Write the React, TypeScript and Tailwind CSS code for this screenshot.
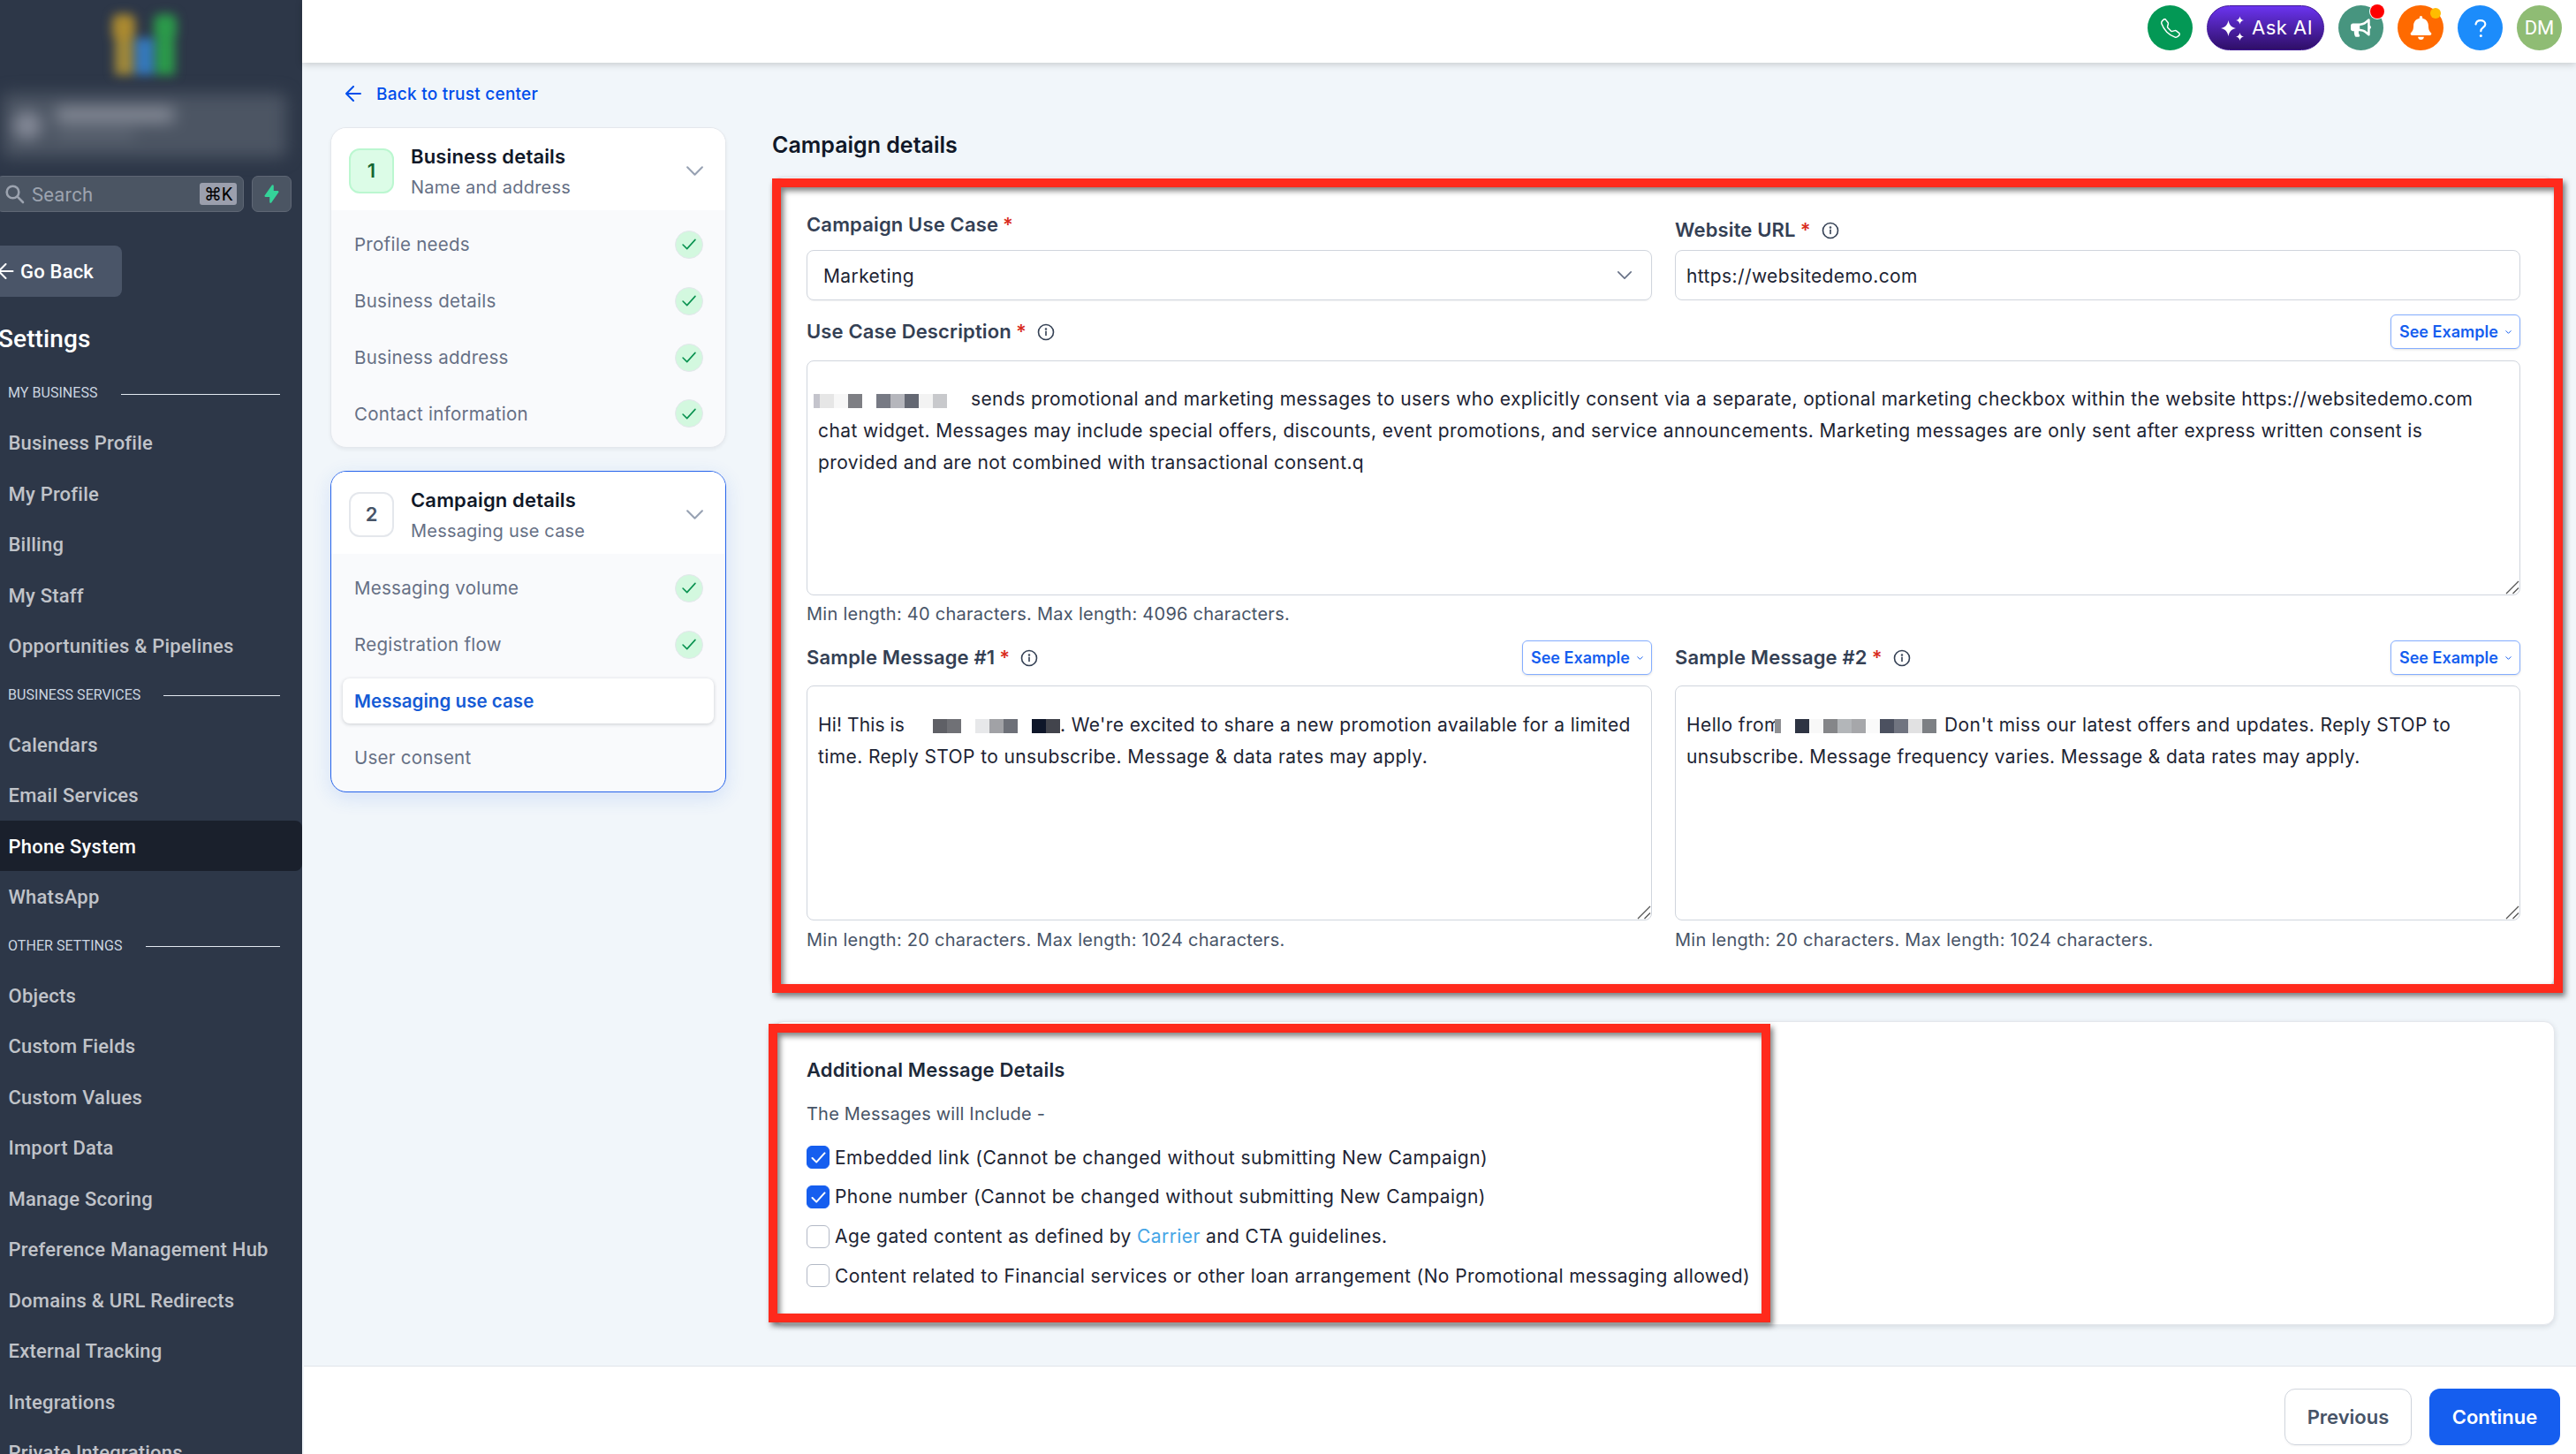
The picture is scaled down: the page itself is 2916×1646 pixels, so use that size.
import React from 'react';
import clsx from 'clsx';
import { BsTelephone } from 'react-icons/bs';
import { FaBell, FaBullhorn } from 'react-icons/fa';
import { HiLightningBolt } from 'react-icons/hi';

interface NavSection {
  title: string;
  items: string[];
}

interface Step {
  label: string;
  done?: boolean;
  active?: boolean;
}

const NAV_SECTIONS: NavSection[] = [
  {
    title: 'MY BUSINESS',
    items: ['Business Profile', 'My Profile', 'Billing', 'My Staff', 'Opportunities & Pipelines'],
  },
  {
    title: 'BUSINESS SERVICES',
    items: ['Calendars', 'Email Services', 'Phone System', 'WhatsApp'],
  },
  {
    title: 'OTHER SETTINGS',
    items: [
      'Objects',
      'Custom Fields',
      'Custom Values',
      'Import Data',
      'Manage Scoring',
      'Preference Management Hub',
      'Domains & URL Redirects',
      'External Tracking',
      'Integrations',
      'Private Integrations',
    ],
  },
];

const BUSINESS_STEPS: Step[] = [
  { label: 'Profile needs', done: true },
  { label: 'Business details', done: true },
  { label: 'Business address', done: true },
  { label: 'Contact information', done: true },
];

const CAMPAIGN_STEPS: Step[] = [
  { label: 'Messaging volume', done: true },
  { label: 'Registration flow', done: true },
  { label: 'Messaging use case', active: true },
  { label: 'User consent' },
];

/* ---------- small icons ---------- */

const ArrowLeft: React.FC<{ className?: string }> = ({ className }) => (
  <svg viewBox="0 0 18 18" className={className} fill="none" stroke="currentColor" strokeLinecap="round" strokeLinejoin="round">
    <path d="M17 9H1M9 1L1 9l8 8" />
  </svg>
);

const Chevron: React.FC<{ className?: string }> = ({ className }) => (
  <svg viewBox="0 0 20 12" className={className} fill="none" stroke="currentColor" strokeLinecap="round" strokeLinejoin="round">
    <path d="M2 2l8 8 8-8" />
  </svg>
);

const Check: React.FC<{ className?: string }> = ({ className }) => (
  <svg viewBox="0 0 18 14" className={className} fill="none" stroke="currentColor" strokeLinecap="round" strokeLinejoin="round">
    <path d="M1.5 7.5l5 5L16.500 1.500" />
  </svg>
);

const Info = () => (
  <svg viewBox="0 0 20 20" className="ml-[12px] h-5 w-5 text-[#344054]" fill="none" stroke="currentColor" strokeWidth="1.6">
    <circle cx="10" cy="10" r="8.500" />
    <path d="M10 9.200v4.300" strokeLinecap="round" />
    <circle cx="10" cy="6.500" r="0.500" />
  </svg>
);

const Sparkles = () => (
  <svg viewBox="0 0 28 28" className="h-7 w-7" fill="currentColor">
    <path d="M9.500 5c1.200 5.500 3 7.500 8.500 9-5.500 1.500-7.300 3.500-8.500 9-1.200-5.500-3-7.500-8.500-9 5.500-1.500 7.300-3.500 8.500-9z" />
    <path d="M22.500 0.500c.6 2.800 1.700 3.900 4.500 4.500-2.800.6-3.900 1.700-4.500 4.500-.6-2.800-1.700-3.900-4.500-4.500 2.800-.6 3.900-1.700 4.500-4.500z" />
    <path d="M22.500 19c.6 2.800 1.700 3.900 4.500 4.500-2.800.6-3.900 1.700-4.500 4.500-.6-2.800-1.700-3.900-4.500-4.500 2.800-.6 3.900-1.700 4.500-4.500z" />
  </svg>
);

/* ---------- sidebar ---------- */

const Sidebar = () => (
  <aside className="flex h-full w-[342px] shrink-0 flex-col overflow-hidden bg-[#2d3748] font-[Roboto,sans-serif]">
    <div className="ml-[127px] mt-[16px] flex h-[69px] shrink-0 items-end blur-[6px]">
      <div className="flex h-[69px] w-[26px] flex-col items-center">
        <div className="h-[30px] w-[26px] rounded-lg bg-[#ab8a30]" />
        <div className="h-[39px] w-[21px] bg-[#9f883a]" />
      </div>
      <div className="h-[42px] w-[21px] bg-[#3579bd]" />
      <div className="flex h-[69px] w-[26px] flex-col items-center">
        <div className="h-[30px] w-[26px] rounded-lg bg-[#2b9a4a]" />
        <div className="h-[39px] w-[22px] bg-[#2b9a4a]" />
      </div>
    </div>

    {/* Account switcher */}
    <div className="ml-[3px] mt-[21px] flex h-[72px] w-[321px] shrink-0 items-center rounded-md bg-[#4c5563] pl-3 blur-[9px]">
      <div className="h-8 w-8 rounded-full bg-[#868b99]" />
      <div className="-mt-[6px] ml-4 flex flex-col gap-2.5">
        <div className="h-[16px] w-[134px] rounded bg-[#8b909c]" />
        <div className="h-[8px] w-[90px] rounded bg-[#656d7a]" />
      </div>
    </div>

    <div className="mt-[21px] flex h-[41px] shrink-0">
      <div className="-ml-1 flex w-[280px] items-center rounded-[7px] border border-[#5f6775] bg-[#4b5563] pl-[9px] pr-[7px]">
        <svg viewBox="0 0 22 22" className="h-[22px] w-[22px] text-[#9ca3af]" fill="none" stroke="currentColor" strokeWidth="2.600" strokeLinecap="round">
          <circle cx="8.500" cy="8.500" r="6.800" />
          <path d="M13.700 13.700L20 20" />
        </svg>
        <span className="ml-[8px] pt-[2px] text-[22px] tracking-[0.3px] text-[#9ca3af]">Search</span>
        <span className="ml-auto flex h-[25px] w-[42px] items-center justify-center rounded-[3px] bg-[#9b9fad] text-[20px] leading-none text-black">⌘K</span>
      </div>
      <div className="ml-[9px] flex w-[45px] items-center justify-center rounded-[7px] border border-[#5f6775] bg-[#4b5563]">
        <HiLightningBolt className="h-[23px] w-[23px] text-[#34d399]" />
      </div>
    </div>

    <div className="mt-[38px] flex h-[58px] w-[138px] shrink-0 items-center rounded-r-lg bg-[#4a5568] text-[22px] font-medium text-white">
      <ArrowLeft className="-ml-[3px] h-[18px] w-[19px] stroke-2" />
      <span className="ml-[7px] tracking-[0.2px]">Go Back</span>
    </div>

    <h1 className="-ml-[2px] mt-[32px] h-[50px] shrink-0 text-[28px] font-medium leading-[32px] tracking-[0.1px] text-white">Settings</h1>

    {NAV_SECTIONS.map(section => (
      <div key={section.title} className="shrink-0">
        <div className="flex h-[54px] items-center pl-[9px] pr-[25px]">
          <span className="text-[16px] tracking-[0.05px] text-[#cbd5e0]">{section.title}</span>
          <span className="ml-[26px] mt-[2px] h-px flex-1 bg-[#e2e8f0]" />
        </div>
        {section.items.map(item => (
          <div
            key={item}
            className={clsx(
              'flex h-[57.500px] items-center rounded-r-lg pl-[9.500px] pt-[2px] text-[22px] font-medium tracking-[0.22px]',
              item === 'Phone System' ? 'bg-[#1a202c] text-white' : 'text-[#c0c3c9]',
            )}
          >
            {item}
          </div>
        ))}
      </div>
    ))}
  </aside>
);

/* ---------- top bar ---------- */

const TopBar = () => (
  <header className="relative z-10 flex h-[71px] shrink-0 gap-4 bg-white pr-4 pt-[6px] text-white shadow-[0_2px_8px_rgba(0,0,0,0.18)]">
    <div className="ml-auto flex h-[51px] w-[51px] items-center justify-center rounded-full bg-[#039855]">
      <BsTelephone className="h-[22px] w-[22px]" />
    </div>
    <div className="flex h-[51px] w-[133px] items-center rounded-full border border-[#3f1596] bg-linear-to-b from-[#6b34f0] to-[#2f0f68] pl-[14px]">
      <Sparkles />
      <span className="ml-[8px] text-[22px] tracking-[0.5px]">Ask AI</span>
    </div>
    <div className="relative flex h-[51px] w-[51px] items-center justify-center rounded-full bg-[#47957f]">
      <FaBullhorn className="h-[23px] w-[23px]" />
      <span className="absolute -right-[1px] -top-[1px] h-4 w-4 rounded-full bg-[#ff0000] ring-1 ring-white" />
    </div>
    <div className="relative flex h-[51px] w-[52px] items-center justify-center rounded-full bg-[#ff6a00]">
      <FaBell className="h-[27px] w-[25px]" />
      <span className="absolute right-[3px] top-[3px] h-3 w-3 rounded-full bg-[#ffbc00]" />
    </div>
    <div className="flex h-[51px] w-[51px] items-center justify-center rounded-full bg-[#1c8cfb]">
      <svg viewBox="0 0 14 20" className="h-[20px] w-[14px]" fill="none" stroke="currentColor" strokeWidth="2.200" strokeLinecap="round">
        <path d="M1.500 5.500C2 2.800 4.200 1.200 7 1.200c3 0 5.300 1.700 5.300 4.300 0 3.700-5 3.800-5 7.700" />
        <path d="M7.300 18.400v.1" strokeWidth="3" />
      </svg>
    </div>
    <div className="flex h-[51px] w-[51px] items-center justify-center rounded-full bg-[#8fbc74] font-[Roboto,sans-serif] text-[22px]">DM</div>
  </header>
);

/* ---------- stepper ---------- */

interface StepCardProps {
  index: number;
  title: string;
  subtitle: string;
  steps: Step[];
  current?: boolean;
}

const StepCard: React.FC<StepCardProps> = ({ index, title, subtitle, steps, current = false }) => (
  <div
    className={clsx(
      'overflow-hidden rounded-[18px] border bg-[#f9fafc]',
      current
        ? 'h-[364px] border-[#2563eb] shadow-[0_6px_22px_rgba(37,99,235,0.14)]'
        : 'h-[363px] border-[#e4e7ec] shadow-[0_2px_4px_rgba(16,24,40,0.06)]',
    )}
  >
    <div className="flex h-[93px] items-center bg-white pl-[20px] pr-[24px] pt-[4px]">
      <div
        className={clsx(
          'flex h-[51px] w-[51px] items-center justify-center rounded-xl border-2 text-[22px] font-semibold',
          current ? 'border-[#e4e7ec] text-[#475467]' : 'border-[#bbf7d0] bg-[#dcfce7] text-[#166534]',
        )}
      >
        {index}
      </div>
      <div className="ml-[19px] pt-[2px]">
        <div className="text-[22px] font-semibold leading-[35px] tracking-[0.15px] text-[#101828]">{title}</div>
        <div className="text-[20px] leading-[35px] tracking-[0.2px] text-[#667085]">{subtitle}</div>
      </div>
      <Chevron className="ml-auto h-[13px] w-[21px] stroke-2 text-[#98a2b3]" />
    </div>
    <div className="flex flex-col gap-[12.300px] px-[13px] pt-[13px]">
      {steps.map(step => (
        <div
          key={step.label}
          className={clsx(
            'flex h-[51.600px] items-center rounded-lg pl-[13px] pr-[12px] text-[20.500px]',
            step.active
              ? 'bg-white font-semibold tracking-[0.050px] text-[#155bd5] shadow-[0_1px_4px_rgba(16,24,40,0.2)]'
              : 'tracking-[0.270px] text-[#667085]',
          )}
        >
          <span className="pt-[2px]">{step.label}</span>
          {step.done && (
            <span className="ml-auto flex h-8 w-8 items-center justify-center rounded-full border border-[#e4e7ec] bg-[#d3f8df]">
              <Check className="h-[13px] w-[18px] stroke-[1.700px] text-[#099250]" />
            </span>
          )}
        </div>
      ))}
    </div>
  </div>
);

/* ---------- form pieces ---------- */

const Label: React.FC<{ text: string; info?: boolean }> = ({ text, info = true }) => (
  <div className="flex h-[35px] items-center text-[22px] font-semibold tracking-[0.15px] text-[#344054]">
    {text}
    <span className="ml-[5px] text-[#d92d20]">*</span>
    {info && <Info />}
  </div>
);

const LabelRow: React.FC<{ text: string }> = ({ text }) => (
  <div className="flex h-[39px] items-center justify-between">
    <Label text={text} />
    <button className="flex h-[39px] w-[147px] items-center rounded-md border border-[#84adff] pl-[9px] text-[18px] font-semibold text-[#155eef] shadow-sm">
      See Example
      <Chevron className="ml-[8px] h-[4px] w-[7px] stroke-[3px]" />
    </button>
  </div>
);

const TextBox: React.FC<{ children: React.ReactNode }> = ({ children }) => (
  <div className="relative h-[266px] rounded-lg border border-[#d0d5dd] bg-white pl-[12px] pt-[26px] text-[21px] leading-[36px] tracking-[0.390px] text-[#1d2433]">
    {children}
    <svg viewBox="0 0 16 16" className="absolute bottom-0 right-0 h-4 w-4" stroke="#555" strokeWidth="1.300">
      <path d="M1 15L15 1M8.500 15L15 8.500" />
    </svg>
  </div>
);

const Hint: React.FC<{ children: React.ReactNode }> = ({ children }) => (
  <div className="h-[28px] text-[20px] leading-[28px] tracking-[0.260px] text-[#475467]">{children}</div>
);

// Pixelated strip hiding the business name
const Redacted: React.FC<{ cells: string[]; lead?: string; className?: string }> = ({ cells, lead, className }) => (
  <span className={clsx('inline-flex h-4 shrink-0', className)}>
    {lead && <span className="w-[7px]" style={{ background: lead }} />}
    {cells.map((color, i) => (
      <span key={i} className="w-4" style={{ background: color || 'transparent' }} />
    ))}
  </span>
);

const CheckRow: React.FC<{ checked?: boolean; children: React.ReactNode }> = ({ checked = false, children }) => (
  <div className="flex h-[44.700px] items-center text-[21px] tracking-[0.400px] text-[#1d2433]">
    <span
      className={clsx(
        'mr-[6px] flex h-[26px] w-[26px] items-center justify-center rounded-[6px] border',
        checked ? 'border-[#155eef] bg-[#155eef] text-white' : 'border-[#b3b9c6] bg-white',
      )}
    >
      {checked && <Check className="h-[13px] w-[17px] stroke-[2.200px]" />}
    </span>
    <span>{children}</span>
  </div>
);

const CampaignForm = () => (
  <section className="relative h-[918px] rounded-xl border border-[#e4e7ec] bg-white pl-[37px] pr-[38px] pt-[36px] shadow-[0_2px_6px_rgba(16,24,40,0.12)]">
    <div className="grid grid-cols-2 gap-[26px]">
      <div>
        <Label text="Campaign Use Case" info={false} />
        <div className="mt-[11px] flex h-[57px] items-center justify-between rounded-lg border border-[#d0d5dd] pl-[18px] pr-[21px] text-[21px] tracking-[0.390px] text-[#1d2433] shadow-xs">
          <span className="pt-[2px]">Marketing</span>
          <Chevron className="h-[11px] w-[18px] stroke-[1.800px] text-[#667085]" />
        </div>
      </div>
      <div className="pt-[6px]">
        <Label text="Website URL" />
        <div className="mt-[5px] flex h-[57px] items-center rounded-lg border border-[#d0d5dd] pl-[12px] pt-[2px] text-[21px] tracking-[0.390px] text-[#1d2433]">
          https://websitedemo.com
        </div>
      </div>
    </div>

    <div className="mt-[16px]">
      <LabelRow text="Use Case Description" />
      <div className="mt-[13px]">
        <TextBox>
          <div className="-mt-px flex items-center whitespace-nowrap">
            <Redacted
              className="-ml-[5px] mr-[27px] mt-[3px]"
              lead="#c4c4cc"
              cells={['#e6e6e6', '#f7f7f7', '#7e7f84', '', '#777a84', '#b5b6bc', '#646873', '#f3f3f3', '#c8c9cc']}
            />
            sends promotional and marketing messages to users who explicitly consent via a separate, optional marketing checkbox within the website https://websitedemo.com
          </div>
          <div className="whitespace-nowrap">
            chat widget. Messages may include special offers, discounts, event promotions, and service announcements. Marketing messages are only sent after express written consent is
          </div>
          <div>provided and are not combined with transactional consent.q</div>
        </TextBox>
      </div>
      <div className="mt-[7px]">
        <Hint>Min length: 40 characters. Max length: 4096 characters.</Hint>
      </div>
    </div>

    <div className="mt-[16px] grid grid-cols-2 gap-[26px]">
      <div>
        <LabelRow text="Sample Message #1" />
        <div className="mb-[8px] mt-[12px]">
          <TextBox>
            <div className="flex items-center whitespace-nowrap">
              <span className="w-[130px] tracking-[0.100px]">Hi! This is</span>
              <Redacted className="mt-[2px]" cells={['#5f6066', '#707176', '', '#e7e8ea', '#a1a2a6', '#6d7078', '', '#0e1629', '#42444c']} />
              <span>. We're excited to share a new promotion available for a limited</span>
            </div>
            <div>time. Reply STOP to unsubscribe. Message &amp; data rates may apply.</div>
          </TextBox>
        </div>
        <Hint>Min length: 20 characters. Max length: 1024 characters.</Hint>
      </div>
      <div>
        <LabelRow text="Sample Message #2" />
        <div className="mb-[8px] mt-[12px]">
          <TextBox>
            <div className="flex items-center whitespace-nowrap">
              <span className="w-[100px]">Hello from</span>
              <Redacted
                className="mt-[2px]"
                lead="#8f9093"
                cells={['', '#2e3443', '#f8f8f8', '#858689', '#b3b6b9', '#a6a7aa', '#fafafa', '#4c5160', '#707480', '#e1e1e2', '#7d8084']}
              />
              <span className="ml-[9px] tracking-[0.420px]">Don't miss our latest offers and updates. Reply STOP to</span>
            </div>
            <div className="tracking-[0.360px]">unsubscribe. Message frequency varies. Message &amp; data rates may apply.</div>
          </TextBox>
        </div>
        <Hint>Min length: 20 characters. Max length: 1024 characters.</Hint>
      </div>
    </div>

    {/* Highlight frame */}
    <div className="pointer-events-none absolute -left-[2px] top-[1px] h-[922px] w-[2027px] border-[10px] border-[#ff2a1c] drop-shadow-[3px_4px_3px_rgba(0,0,0,0.5)]" />
  </section>
);

const AdditionalDetails = () => (
  <section className="relative mt-[38px] h-[344px] rounded-xl border border-[#e4e7ec] bg-white pl-[37px] pt-[39px] shadow-[0_2px_6px_rgba(16,24,40,0.12)]">
    <h3 className="h-[30px] text-[22px] font-semibold leading-[30px] tracking-[0.15px] text-[#1d2939]">Additional Message Details</h3>
    <p className="mt-[20px] h-[30px] text-[20px] leading-[30px] tracking-[0.2px] text-[#475467]">The Messages will Include -</p>
    <div className="mt-[12px]">
      <CheckRow checked>
        <span className="tracking-[0.460px]">Embedded link (Cannot be changed without submitting New Campaign)</span>
      </CheckRow>
      <CheckRow checked>
        <span className="tracking-[0.460px]">Phone number (Cannot be changed without submitting New Campaign)</span>
      </CheckRow>
      <CheckRow>
        Age gated content as defined by <span className="text-[#45a5e6]">Carrier</span> and CTA guidelines.
      </CheckRow>
      <CheckRow>Content related to Financial services or other loan arrangement (No Promotional messaging allowed)</CheckRow>
    </div>
    <div className="pointer-events-none absolute -left-[6px] top-[2px] h-[338px] w-[1134px] border-[10px] border-[#ff2a1c] drop-shadow-[3px_4px_3px_rgba(0,0,0,0.5)]" />
  </section>
);

const App = () => (
  <div className="flex h-[1646px] w-[2916px] overflow-hidden bg-[#f1f6fa] font-[Inter,sans-serif]">
    <Sidebar />
    <div className="flex min-w-0 flex-1 flex-col">
      <TopBar />
      <main className="flex h-[1475px] shrink-0 pl-[32px] pr-6">
        <div className="w-[448px] shrink-0">
          <div className="mb-[3px] flex h-[70px] items-center pl-[17px] text-[19px] font-medium tracking-[0.25px] text-[#004eeb]">
            <ArrowLeft className="h-[18px] w-[18px] stroke-2" />
            <span className="ml-[17px] pt-[2px]">Back to trust center</span>
          </div>
          <StepCard index={1} title="Business details" subtitle="Name and address" steps={BUSINESS_STEPS} />
          <div className="mt-[26px]">
            <StepCard index={2} title="Campaign details" subtitle="Messaging use case" steps={CAMPAIGN_STEPS} current />
          </div>
        </div>
        <div className="ml-[53px] w-[2017px] shrink-0 pt-[77px]">
          <h2 className="-ml-px mb-[20px] h-[32px] text-[25px] font-semibold leading-[32px] text-[#101828]">Campaign details</h2>
          <CampaignForm />
          <AdditionalDetails />
        </div>
      </main>
      <footer className="ml-[2px] flex h-[100px] shrink-0 justify-end gap-5 border-t border-[#e0e4ea] bg-white pr-[18px] pt-[25px] text-[22px] font-semibold">
        <button className="h-[64px] w-[144px] rounded-xl border border-[#d0d5dd] text-[#475467] shadow-xs">Previous</button>
        <button className="h-[64px] w-[148px] rounded-xl bg-[#155eef] text-white shadow-xs">Continue</button>
      </footer>
    </div>
  </div>
);

export default App;
